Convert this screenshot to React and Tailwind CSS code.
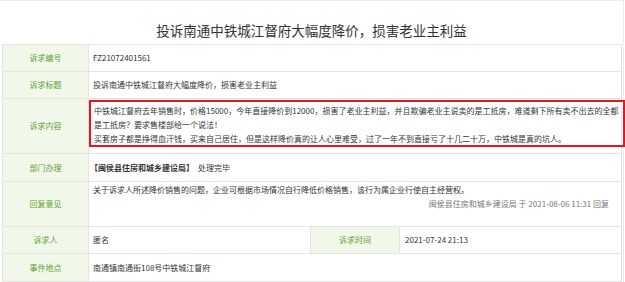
import React from 'react';

const FONT = { fontFamily: '"Noto Sans CJK SC", "Noto Sans", sans-serif' };

const Label = ({ children }) => (
  <div className="flex items-center justify-center bg-[#f1f8ea] text-[#5f9f33] border-r border-[#e4e4e4]">
    {children}
  </div>
);

const Row = ({ label, h, children }) => (
  <div className={`grid grid-cols-[86px_1fr] border-b border-[#e4e4e4] ${h}`}>
    <Label>{label}</Label>
    {children}
  </div>
);

const App = () => {
  return (
    <div className="w-[625px] h-[282px] bg-white overflow-hidden" style={FONT}>
      <div className="w-[624px] h-[282px] border-t border-r border-[#ececec]">
        <div className="h-[43px] pt-[20px] text-center text-[13.5px] leading-[18px] text-[#333]">
          投诉南通中铁城江督府大幅度降价，损害老业主利益
        </div>

        <div className="ml-[2px] w-[620px] border-t border-l border-r border-[#e4e4e4] text-[8px] leading-[14px] text-[#333]">
          <Row label="诉求编号" h="h-[27px]">
            <div className="flex items-center pl-[4px]">FZ21072401561</div>
          </Row>

          <Row label="诉求标题" h="h-[27px]">
            <div className="flex items-center pl-[4px]">投诉南通中铁城江督府大幅度降价，损害老业主利益</div>
          </Row>

          <Row label="诉求内容" h="h-[55px]">
            <div className="pt-[1px]">
              <div className="h-[47px] mr-[-4px] border-2 border-[#e8161c] pl-[3px] pt-[2px] whitespace-nowrap">
                <div>中铁城江督府去年销售时，价格15000，今年直接降价到12000，损害了老业主利益，并且欺骗老业主说卖的是工抵房，难道剩下所有卖不出去的全都</div>
                <div>是工抵房？要求售楼部给一个说法！</div>
                <div>买套房子都是挣得血汗钱，买来自己居住，但是这样降价真的让人心里难受，过了一年不到直接亏了十几二十万，中铁城是真的坑人。</div>
              </div>
            </div>
          </Row>

          <Row label="部门办理" h="h-[28px]">
            <div className="flex items-center pl-[1px]">
              <span className="font-bold">【闽侯县住房和城乡建设局】</span>
              <span className="ml-[4px]">处理完毕</span>
            </div>
          </Row>

          <Row label="回复意见" h="h-[45px]">
            <div className="pl-[4px] pr-[12px] pt-[1px]">
              <div>关于诉求人所述降价销售的问题，企业可根据市场情况自行降低价格销售，该行为属企业行使自主经营权。</div>
              <div className="text-right text-[#777]">闽侯县住房和城乡建设局 于 2021-08-06 11:31 回复</div>
            </div>
          </Row>

          <div className="grid grid-cols-[86px_222px_89px_1fr] h-[27px] border-b border-[#e4e4e4]">
            <Label>诉求人</Label>
            <div className="flex items-center pl-[4px] border-r border-[#e4e4e4]">匿名</div>
            <Label>诉求时间</Label>
            <div className="flex items-center pl-[5px]">2021-07-24 21:13</div>
          </div>

          <Row label="事件地点" h="h-[28px]">
            <div className="flex items-center pl-[4px]">南通镇南通街108号中铁城江督府</div>
          </Row>
        </div>
      </div>
    </div>
  );
};

export default App;
